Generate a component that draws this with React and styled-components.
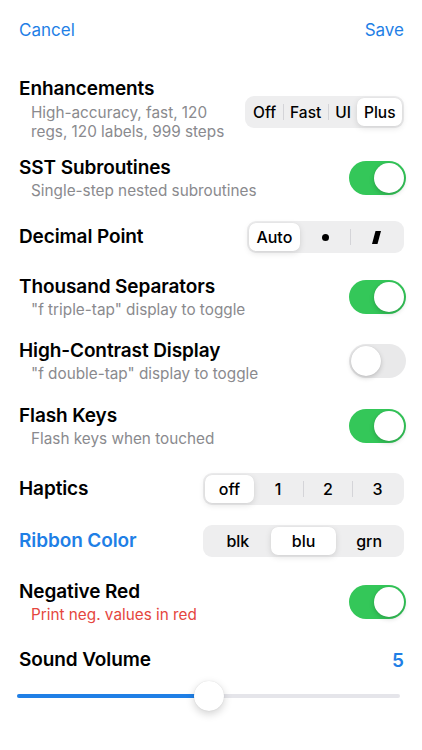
import React from 'react'
import styled, { createGlobalStyle } from 'styled-components'

const GlobalStyle = createGlobalStyle`
  body {
    margin: 0;
    background: #ffffff;
    font-family: "Inter", "Liberation Sans", sans-serif;
    -webkit-font-smoothing: antialiased;
  }
`

const BLUE = '#1f7fe6'
const GREEN = '#34c759'
const RED = '#e5463e'

const Page = styled.div`
  width: 422px;
  height: 750px;
  box-sizing: border-box;
  padding: 0 18px 0 19px;
  display: flex;
  flex-direction: column;
`

const Header = styled.div`
  height: 60px;
  display: flex;
  align-items: center;
  justify-content: space-between;
  margin-bottom: 12px;
`

const NavButton = styled.span`
  font-size: 17px;
  color: ${BLUE};
`

const Row = styled.div`
  height: ${p => p.h}px;
  display: flex;
  align-items: center;
  justify-content: space-between;
`

const TextBlock = styled.div`
  display: flex;
  flex-direction: column;
  margin-top: ${p => p.mt || 0}px;
`

const Title = styled.div`
  font-size: 19px;
  font-weight: 600;
  line-height: 22px;
  color: ${p => p.color || '#000'};
  letter-spacing: -0.1px;
`

const Subtitle = styled.div`
  font-size: 15.3px;
  line-height: 19px;
  margin-top: ${p => p.mt || 2}px;
  padding-left: 12px;
  color: ${p => p.color || '#8a8a8e'};
  max-width: ${p => p.mw || 'none'};
`

const Switch = styled.div`
  width: 57px;
  height: 34px;
  border-radius: 17px;
  background: ${p => (p.on ? GREEN : '#e9e9ea')};
  position: relative;
  flex-shrink: 0;
  margin-right: -2px;

  &::after {
    content: '';
    position: absolute;
    top: 2px;
    left: ${p => (p.on ? '25px' : '2px')};
    width: 30px;
    height: 30px;
    border-radius: 50%;
    background: #fff;
    box-shadow: 0 2px 5px rgba(0, 0, 0, 0.18), 0 0 1px rgba(0, 0, 0, 0.12);
  }
`

const SegTrack = styled.div`
  display: flex;
  align-items: center;
  height: 32px;
  box-sizing: border-box;
  padding: 2px;
  border-radius: 9px;
  background: #eeeeef;
  width: ${p => (p.w ? `${p.w}px` : 'auto')};
  margin-top: ${p => p.mt || 0}px;
`

const Segment = styled.div`
  flex: ${p => (p.equal ? '1 1 0' : '0 0 auto')};
  height: 28px;
  padding: 0 ${p => (p.equal ? 0 : 6.5)}px;
  display: flex;
  align-items: center;
  justify-content: center;
  border-radius: 7px;
  font-size: ${p => (p.equal ? 16 : 15.5)}px;
  font-weight: 500;
  color: #000;
  background: ${p => (p.active ? '#fff' : 'transparent')};
  box-shadow: ${p =>
    p.active ? '0 2px 6px rgba(0,0,0,0.12), 0 0 1px rgba(0,0,0,0.08)' : 'none'};
`

const Divider = styled.div`
  width: 1px;
  height: 16px;
  flex-shrink: 0;
  background: ${p => (p.hidden ? 'transparent' : '#d4d4d8')};
`

const Dot = styled.span`
  width: 7px;
  height: 7px;
  border-radius: 50%;
  background: #000;
`

const Value = styled.span`
  font-size: 19px;
  font-weight: 600;
  color: ${BLUE};
`

const SliderWrap = styled.div`
  height: 28px;
  position: relative;
  display: flex;
  align-items: center;
  margin-left: -2px;
  margin-right: 4px;
`

const Track = styled.div`
  width: 100%;
  height: 4px;
  border-radius: 2px;
  background: #e5e5ea;
  position: relative;
`

const Fill = styled.div`
  height: 100%;
  border-radius: 2px;
  background: ${BLUE};
`

const Thumb = styled.div`
  position: absolute;
  top: -13px;
  width: 30px;
  height: 30px;
  margin-left: -15px;
  border-radius: 50%;
  background: #fff;
  box-shadow: 0 3px 8px rgba(0, 0, 0, 0.18), 0 0 1px rgba(0, 0, 0, 0.15);
`

const Comma = () => (
  <svg width="9" height="13" viewBox="0 0 9 13">
    <polygon points="3.5,0 9,0 5.5,13 0,13" fill="#000" />
  </svg>
)

const Segmented = ({ options, selected, equal, w, mt }) => (
  <SegTrack w={w} mt={mt}>
    {options.map((opt, i) => (
      <React.Fragment key={i}>
        {i > 0 && <Divider hidden={i === selected || i - 1 === selected} />}
        <Segment equal={equal} active={i === selected}>
          {opt}
        </Segment>
      </React.Fragment>
    ))}
  </SegTrack>
)

const Slider = ({ value, min, max }) => {
  const pct = (value - min) / (max - min)
  // thumb travels between radius offsets
  const pos = `calc(15px + (100% - 30px) * ${pct})`
  return (
    <SliderWrap>
      <Track>
        <Fill style={{ width: pos }} />
        <Thumb style={{ left: pos }} />
      </Track>
    </SliderWrap>
  )
}

export default function App() {
  return (
    <Page>
      <GlobalStyle />
      <Header>
        <NavButton>Cancel</NavButton>
        <NavButton>Save</NavButton>
      </Header>

      <Row h={72}>
        <TextBlock mt={2}>
          <Title>Enhancements</Title>
          <Subtitle mt={3} mw="196px">High-accuracy, fast, 120 regs, 120 labels, 999 steps</Subtitle>
        </TextBlock>
        <Segmented mt={8} options={['Off', 'Fast', 'UI', 'Plus']} selected={3} />
      </Row>

      <Row h={68}>
        <TextBlock>
          <Title>SST Subroutines</Title>
          <Subtitle>Single-step nested subroutines</Subtitle>
        </TextBlock>
        <Switch on />
      </Row>

      <Row h={50}>
        <Title>Decimal Point</Title>
        <Segmented equal w={157} options={['Auto', <Dot />, <Comma />]} selected={0} />
      </Row>

      <Row h={70}>
        <TextBlock>
          <Title>Thousand Separators</Title>
          <Subtitle>"f triple-tap" display to toggle</Subtitle>
        </TextBlock>
        <Switch on />
      </Row>

      <Row h={58}>
        <TextBlock>
          <Title>High-Contrast Display</Title>
          <Subtitle>"f double-tap" display to toggle</Subtitle>
        </TextBlock>
        <Switch />
      </Row>

      <Row h={72}>
        <TextBlock>
          <Title>Flash Keys</Title>
          <Subtitle>Flash keys when touched</Subtitle>
        </TextBlock>
        <Switch on />
      </Row>

      <Row h={54}>
        <Title>Haptics</Title>
        <Segmented equal w={201} options={['off', '1', '2', '3']} selected={0} />
      </Row>

      <Row h={50}>
        <Title color={BLUE}>Ribbon Color</Title>
        <Segmented equal w={201} options={['blk', 'blu', 'grn']} selected={1} />
      </Row>

      <Row h={72}>
        <TextBlock>
          <Title>Negative Red</Title>
          <Subtitle color={RED}>Print neg. values in red</Subtitle>
        </TextBlock>
        <Switch on />
      </Row>

      <Row h={44}>
        <Title>Sound Volume</Title>
        <Value>5</Value>
      </Row>

      <Slider value={5} min={0} max={10} />
    </Page>
  )
}
